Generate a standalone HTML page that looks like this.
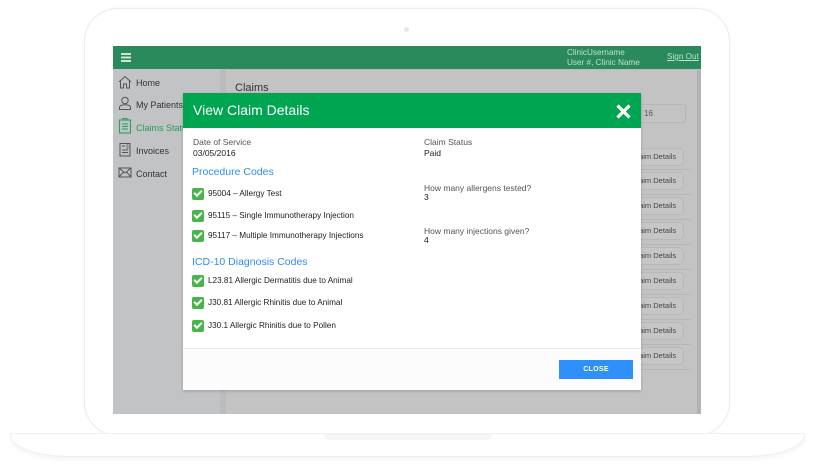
<!DOCTYPE html>
<html><head><meta charset="utf-8"><style>
*{margin:0;padding:0;box-sizing:border-box}
body{width:814px;height:468px;background:#fff;position:relative;overflow:hidden;font-family:"Liberation Sans",Arial,sans-serif}
.abs{position:absolute}
.lap{left:84px;top:8px;width:646px;height:428px;border:1px solid #ececec;border-radius:34px;background:#fff;box-shadow:0 0 3px rgba(0,0,0,.04)}
.base{left:10px;top:433px;width:795px;height:24px;border:1px solid #eee;border-top:1px solid #f0f0f0;border-radius:0 0 60px 60px/0 0 22px 22px;background:#fff;box-shadow:0 3px 4px rgba(0,0,0,.04)}
.notch{left:324px;top:434px;width:168px;height:6px;background:#f6f6f6;border-radius:0 0 8px 8px}
.cam{left:404px;top:27px;width:5px;height:5px;border-radius:50%;background:#e6e6e6}
.screen{left:113px;top:46px;width:588px;height:368px;background:#bbbcbe;overflow:hidden}
.hdr{left:0;top:0;width:588px;height:23px;background:#2b8a5c}
.side{left:0;top:23px;width:107px;height:345px;background:#c2c3c5}
.nav{font-size:9px;color:#333;position:absolute;left:23px}
.content{left:113px;top:24px;width:471px;height:344px;background:#c3c3c3}
.rbtn{position:absolute;left:399px;width:59px;height:18px;border:1px solid #b8b8b8;border-radius:5px;font-size:7.5px;color:#444;line-height:16px;padding-left:6px;background:#c6c6c6}
.sep{position:absolute;left:390px;width:75px;height:1px;background:#b6b6b6}
.modal{left:183px;top:93px;width:458px;height:297px;background:#fff;box-shadow:0 1px 3px rgba(0,0,0,.2)}
.mh{left:0;top:0;width:458px;height:35px;background:#00a551}
.lbl{position:absolute;font-size:8.5px;color:#555}
.val{position:absolute;font-size:8.5px;color:#222}
.sec{position:absolute;font-size:10.5px;color:#2f8df5}
.ck{position:absolute;left:9px;width:12px;height:12px;background:#47b549;border-radius:2px}
.ck:after{content:"";position:absolute;left:2px;top:2px;width:6px;height:3px;border-left:2px solid #fff;border-bottom:2px solid #fff;transform:rotate(-45deg)}
.it{position:absolute;left:25px;font-size:8.2px;color:#222}
</style></head><body>
<div class="abs lap"></div>
<div class="abs base"></div>
<div class="abs notch"></div>
<div class="abs cam"></div>
<div class="abs screen">
 <div class="abs hdr">
  <div class="abs" style="left:8px;top:7px;width:10px;height:1.5px;background:#cfe5d8;box-shadow:0 3.5px 0 #cfe5d8,0 7px 0 #cfe5d8"></div>
  <div class="abs" style="left:454px;top:2px;font-size:8.2px;color:#bfe0cc;line-height:9.5px">ClinicUsername<br>User #, Clinic Name</div>
  <div class="abs" style="left:554px;top:6px;font-size:8.2px;color:#bfe0cc;text-decoration:underline">Sign Out</div>
 </div>
 <div class="abs side">
  <svg class="abs" style="left:5px;top:6px" width="14" height="14" viewBox="0 0 14 14" fill="none" stroke="#555" stroke-width="1"><path d="M1 7L7 1.5 13 7M2.5 5.8V13H5.5V9H8.5V13H11.5V5.8"/></svg>
  <div class="nav" style="top:9px">Home</div>
  <svg class="abs" style="left:5px;top:27px" width="14" height="14" viewBox="0 0 14 14" fill="none" stroke="#555" stroke-width="1"><circle cx="7" cy="4.5" r="3.2"/><path d="M1.5 13.5V11.5C1.5 9.5 4 8.8 7 8.8S12.5 9.5 12.5 11.5V13.5Z"/></svg>
  <div class="nav" style="top:31px">My Patients</div>
  <svg class="abs" style="left:5px;top:48px" width="14" height="17" viewBox="0 0 14 17" fill="none" stroke="#2aa060" stroke-width="1.1"><rect x="1.5" y="3" width="11" height="13"/><path d="M5 3V1.5H9V3M4 7H10M4 9.5H10M4 12H10"/></svg>
  <div class="nav" style="top:54px;color:#2a9a5a">Claims Status</div>
  <svg class="abs" style="left:5px;top:73px" width="14" height="15" viewBox="0 0 14 15" fill="none" stroke="#555" stroke-width="1"><path d="M2 1.5H12V14H2ZM4 8H10M4 10.5H10M4 4H7"/><text x="8" y="6.5" font-size="5" fill="#555" stroke="none">$</text></svg>
  <div class="nav" style="top:77px">Invoices</div>
  <svg class="abs" style="left:5px;top:98px" width="14" height="11" viewBox="0 0 14 11" fill="none" stroke="#555" stroke-width="1"><rect x="1" y="1" width="12" height="9"/><path d="M1 1L7 6 13 1M1 10L5.5 5M13 10L8.5 5"/></svg>
  <div class="nav" style="top:100px">Contact</div>
 </div>
 <div class="abs content">
  <div class="abs" style="left:9px;top:12px;font-size:11px;color:#333">Claims</div>
  <div class="abs" style="left:360px;top:34px;width:100px;height:19px;border:1px solid #b6b6b6;border-radius:3px;font-size:8px;color:#555;line-height:17px;padding-left:57px">16</div>
  <div class="rbtn" style="top:78px">Claim Details</div><div class="sep" style="top:99px"></div>
  <div class="rbtn" style="top:102px">Claim Details</div><div class="sep" style="top:124px"></div>
  <div class="rbtn" style="top:127px">Claim Details</div><div class="sep" style="top:149px"></div>
  <div class="rbtn" style="top:152px">Claim Details</div><div class="sep" style="top:174px"></div>
  <div class="rbtn" style="top:177px">Claim Details</div><div class="sep" style="top:199px"></div>
  <div class="rbtn" style="top:202px">Claim Details</div><div class="sep" style="top:224px"></div>
  <div class="rbtn" style="top:227px">Claim Details</div><div class="sep" style="top:249px"></div>
  <div class="rbtn" style="top:252px">Claim Details</div><div class="sep" style="top:274px"></div>
  <div class="rbtn" style="top:277px">Claim Details</div><div class="sep" style="top:299px"></div>
 </div>
 <div class="abs" style="left:584px;top:24px;width:4px;height:344px;background:#b2b2b4"></div>
</div>
<div class="abs modal">
 <div class="abs mh">
  <div class="abs" style="left:10px;top:9px;font-size:14px;color:#fff">View Claim Details</div>
  <svg class="abs" style="left:433px;top:11px" width="15" height="15" viewBox="0 0 15 15" stroke="#fff" stroke-width="3.2"><path d="M1.5 1.5L13.5 13.5M13.5 1.5L1.5 13.5"/></svg>
 </div>
 <div class="lbl" style="left:10px;top:44px">Date of Service</div>
 <div class="val" style="left:10px;top:55px">03/05/2016</div>
 <div class="lbl" style="left:241px;top:44px">Claim Status</div>
 <div class="val" style="left:241px;top:55px">Paid</div>
 <div class="sec" style="left:9px;top:73px">Procedure Codes</div>
 <div class="ck" style="top:95px"></div><div class="it" style="top:96px">95004 – Allergy Test</div>
 <div class="ck" style="top:117px"></div><div class="it" style="top:118px">95115 – Single Immunotherapy Injection</div>
 <div class="ck" style="top:137px"></div><div class="it" style="top:138px">95117 – Multiple Immunotherapy Injections</div>
 <div class="lbl" style="left:241px;top:90px">How many allergens tested?</div>
 <div class="val" style="left:241px;top:99px">3</div>
 <div class="lbl" style="left:241px;top:133px">How many injections given?</div>
 <div class="val" style="left:241px;top:142px">4</div>
 <div class="sec" style="left:9px;top:163px">ICD-10 Diagnosis Codes</div>
 <div class="ck" style="top:182px"></div><div class="it" style="top:183px">L23.81 Allergic Dermatitis due to Animal</div>
 <div class="ck" style="top:204px"></div><div class="it" style="top:205px">J30.81 Allergic Rhinitis due to Animal</div>
 <div class="ck" style="top:227px"></div><div class="it" style="top:228px">J30.1 Allergic Rhinitis due to Pollen</div>
 <div class="abs" style="left:0;top:255px;width:458px;height:42px;background:#fcfcfc;border-top:1px solid #ececec"></div>
 <div class="abs" style="left:376px;top:267px;width:74px;height:19px;background:#2e8ffd;color:#fff;font-size:7px;font-weight:bold;text-align:center;line-height:19px;letter-spacing:.3px">CLOSE</div>
</div>
</body></html>
